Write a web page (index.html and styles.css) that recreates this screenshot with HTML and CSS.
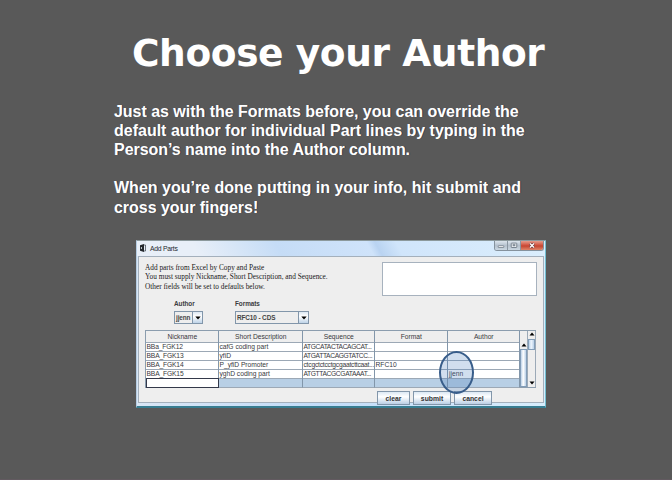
FILE: index.html
```html
<!DOCTYPE html>
<html lang="en">
<head>
<meta charset="utf-8">
<title>Choose your Author</title>
<link rel="stylesheet" href="styles.css">
</head>
<body>
<main class="slide">
  <h1>Choose your Author</h1>
  <div class="copy">
    <p><span class="l1">Just as with the Formats before, you can override the</span><br><span class="l2">default author for individual Part lines by typing in the</span><br><span class="l3">Person’s name into the Author column.</span></p>
    <p class="last"><span class="l4">When you’re done putting in your info, hit submit and</span><br><span class="l5">cross your fingers!</span></p>
  </div>
  <section class="window">
    <header class="titlebar">
      <svg class="app" viewBox="0 0 6 8"><path d="M0 1.2 4 0v8L0 6.8z" fill="#23282d"/><path d="M4 1h1.5v6H4" fill="none" stroke="#4c555e" stroke-width=".8"/><path d="M1.4 3v2" stroke="#dce6ee" stroke-width=".9"/></svg>
      <span class="caption">Add Parts</span>
      <div class="controls">
        <i class="min"><svg viewBox="0 0 13 9"><rect x="3.5" y="4.8" width="6" height="1.9" rx=".5" fill="#fff" stroke="#596673" stroke-width=".7"/></svg></i>
        <i class="max"><svg viewBox="0 0 13 9"><rect x="3.5" y="1.9" width="6" height="4.8" rx=".6" fill="#eef2f5" stroke="#66727e" stroke-width=".9"/><rect x="5.4" y="3.6" width="2.2" height="1.4" fill="#8d99a4" stroke="#66727e" stroke-width=".5"/></svg></i>
        <i class="close"><svg viewBox="0 0 22 9"><path d="m9 2.5 4 4m0-4-4 4" stroke="#6c3436" stroke-width="2.6"/><path d="m9 2.5 4 4m0-4-4 4" stroke="#fff" stroke-width="1.4"/></svg></i>
      </div>
    </header>
    <div class="client">
      <div class="intro">
        <div class="notes">
          <span class="n1">Add parts from Excel by Copy and Paste</span>
          <span class="n2">You must supply Nickname, Short Description, and Sequence.</span>
          <span class="n3">Other fields will be set to defaults below.</span>
        </div>
        <div class="paste"></div>
      </div>
      <div class="defaults">
        <div class="field author"><b>Author</b><div class="combo"><span>jjenn</span><i><svg viewBox="0 0 6 4"><path d="M.3.4h5.4L3 3.6z"/></svg></i></div></div>
        <div class="field formats"><b>Formats</b><div class="combo"><span>RFC10 - CDS</span><i><svg viewBox="0 0 6 4"><path d="M.3.4h5.4L3 3.6z"/></svg></i></div></div>
      </div>
      <div class="grid">
        <div class="table">
          <div class="row head"><span>Nickname</span><span>Short Description</span><span>Sequence</span><span>Format</span><span>Author</span></div>
          <div class="row"><span class="nick">BBa_FGK12</span><span class="desc">cafG coding part</span><span class="seq">ATGCATACTACAGCAT...</span><span></span><span></span></div>
          <div class="row"><span class="nick">BBA_FGK13</span><span class="desc">yfiD</span><span class="seq">ATGATTACAGGTATCC...</span><span></span><span></span></div>
          <div class="row"><span class="nick">BBA_FGK14</span><span class="desc">P_yfiD Promoter</span><span class="low">ctcgctctcctgcgaatcttcaat...</span><span class="fmt">RFC10</span><span></span></div>
          <div class="row"><span class="nick">BBA_FGK15</span><span class="desc">yghD coding part</span><span class="seq">ATGTTACGCGATAAAT...</span><span></span><span class="jj">jjenn</span></div>
          <div class="row selected"><span class="focus"></span><span></span><span></span><span></span><span></span></div>
        </div>
        <div class="scroll inner">
          <svg viewBox="0 0 6 4"><path d="M.5 3.5h5L3 .5z"/></svg><div class="thumb"></div>
        </div>
        <div class="scroll outer">
          <svg viewBox="0 0 6 4"><path d="M.5 3.5h5L3 .5z"/></svg><div class="thumb"></div><svg class="down" viewBox="0 0 6 4"><path d="M.5.5h5L3 3.5z"/></svg>
        </div>
        <div class="ring"></div>
      </div>
      <div class="actions"><span class="btn clear">clear</span><span class="btn submit">submit</span><span class="btn cancel">cancel</span></div>
    </div>
  </section>
</main>
</body>
</html>
```
FILE: styles.css
```css
* { box-sizing: border-box; }
body { margin: 0; background: #595959; overflow: hidden; }
.slide { width: 672px; height: 480px; padding: 31px 0 0; border-bottom: 1px solid #625a60; font-family: "Liberation Sans", Arial, sans-serif; }
h1 { margin: 0 0 0 132px; height: 44px; font: bold 37.5px/44px "DejaVu Sans", Verdana, sans-serif; letter-spacing: -.4px; color: #fff; white-space: nowrap; }
.copy { margin: 27px 0 0 114px; height: 138px; font-weight: bold; font-size: 16px; line-height: 19px; color: #fff; white-space: nowrap; text-shadow: 1px 0 0 #3c3c46; }
.copy p { margin: 0 0 19px; }
.copy .last { line-height: 19.5px; }
.l1 { letter-spacing: -.03px; }
.l3, .l5 { letter-spacing: -.04px; }
.window { width: 410px; height: 168px; margin-left: 136px; padding: 0 1px 4px; border: 1px solid #b5cce2; border-top-color: #8c999c; border-right-color: #73bfd2; border-bottom: 2px solid #387d91; background: linear-gradient(90deg, #d9e6f5, #c2dcf8 45%, #d7edfc); }
.titlebar { height: 15px; display: flex; background: linear-gradient(62deg, #e8eff8 0 15%, #c5dcf6 35%, #cfe3fa 57%, #b9d3f1 59%, #d0e5fb 64%, #dbeefc); margin: 0 -1px; padding-left: 3px; }
.app { width: 6px; height: 8px; margin-top: 3px; }
.caption { margin-left: 4px; font-size: 6.8px; line-height: 15px; color: #25292e; letter-spacing: -.25px; }
.controls { display: flex; height: 10px; margin: 0 1px 0 auto; border: 1px solid #85929d; border-top: 0; border-radius: 0 0 3px 3px; overflow: hidden; }
.controls i { display: block; width: 13px; height: 9px; background: linear-gradient(#dce5ed, #b5c1cd 50%, #cbd8e2); border-right: 1px solid #8996a1; }
.controls svg { display: block; width: 100%; height: 100%; }
.controls .close { width: 22px; border: 0; background: linear-gradient(#e69d8d, #cf503c 48%, #c54631 55%, #df8569); }
.client { height: 147px; border: 1px solid #a4b0bc; background: #eeeeee; padding: 5px 6px 0 6px; }
.intro { display: flex; justify-content: space-between; height: 41px; }
.notes { font: 7.3px/9.7px "Liberation Serif", serif; color: #181818; white-space: nowrap; padding-top: .5px; }
.notes span { display: block; width: max-content; }
.n2 { letter-spacing: .01px; }
.paste { width: 155px; height: 34px; border: 1px solid #a7b2be; background: #fff; }
.defaults { display: flex; height: 27px; }
.field b { display: block; font-size: 6.4px; line-height: 8px; height: 9px; margin-top: -3px; color: #3c3c40; letter-spacing: -.05px; }
.author { width: 61px; margin-left: 29px; }
.combo { display: flex; width: 29px; height: 13px; border: 1px solid #8296aa; margin-top: 2px; font-weight: bold; font-size: 6.4px; line-height: 12px; color: #444; background: #eee; letter-spacing: -.1px; }
.combo span { flex: 1; padding-left: 1px; white-space: nowrap; }
.combo i { width: 10px; border-left: 1px solid #8296aa; background: linear-gradient(#dde8f3, #fff 40%, #bed3e8); display: flex; align-items: center; justify-content: center; }
.combo svg { width: 6px; height: 4px; }
.formats .combo { width: 74px; }
.grid { position: relative; display: flex; height: 58px; border: 1px solid #8b9dae; border-right: 0; width: 391px; }
.table { width: 374px; flex: none; }
.row { display: grid; grid-template-columns: 73px 84px 72px 73px 72px; height: 9.2px; font-size: 6.7px; line-height: 9px; color: #38383c; background: #fff; white-space: nowrap; }
.row span { border-right: 1px solid #8296aa; border-bottom: 1px solid #9ca8b5; padding-left: .5px; min-width: 0; }
.nick { letter-spacing: -.14px; }
.desc { letter-spacing: -.02px; }
.seq { letter-spacing: -.38px; }
.low { letter-spacing: -.22px; }
.head { height: 10.6px; line-height: 11px; background: #eee; text-align: center; }
.row.head { height: 10.6px; line-height: 11px; background: #eee; }
.row.selected { background: #b8cfe5; }
.row .focus { background: #fff; border: 1px solid #34394a; }
.row .jj { padding-left: 1px; }
.scroll { display: flex; flex-direction: column; align-items: center; border-right: 1px solid #9ba9b7; height: 56px; background: #eee; }
.scroll svg { width: 6px; height: 4px; flex: none; }
.inner { width: 8px; padding-top: 12px; }
.inner .thumb { width: 7px; flex: 1; margin-top: 2px; border: 1px solid #829db8; background: linear-gradient(90deg, #bad0e7, #fff 45%, #bad0e7); }
.outer { width: 9px; padding: 1px 0 2px; }
.outer .thumb { width: 7px; height: 11px; margin-top: 3px; border: 1px solid #829db8; background: linear-gradient(90deg, #b9d0e8, #edf5fd 45%, #b9d0e8); }
.outer .down { margin-top: auto; }
.ring { position: absolute; left: 293px; top: 20px; width: 35px; height: 43px; border: 2.6px solid #385d8a; border-radius: 50%; background: rgba(79,129,189,.26); }
.actions { display: flex; gap: 3px; margin: 3px 0 0 232px; }
.btn { height: 14px; border: 1px solid #8296aa; background: linear-gradient(#dce8f3, #fff 40%, #bacfe5); font-weight: bold; font-size: 6.8px; line-height: 13px; text-align: center; color: #333; }
.clear { width: 33px; }
.submit { width: 38px; }
.cancel { width: 38px; }
```
